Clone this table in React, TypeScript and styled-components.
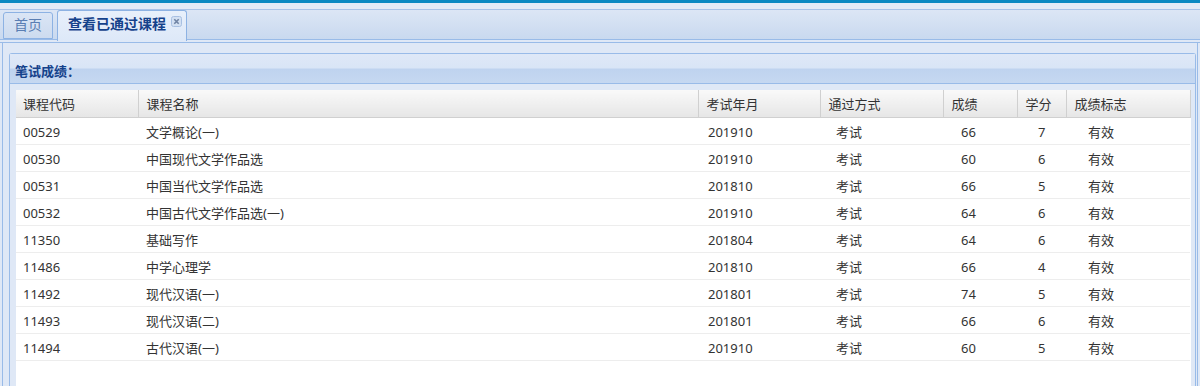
import styled, { createGlobalStyle } from "styled-components";

type TCourse = {
  code: string;
  name: string;
  month: string;
  method: string;
  score: number;
  credit: number;
  flag: string;
};

type TColumn = {
  title: string;
  width: number;
  indent: number; // data text offset
  key: keyof TCourse;
};

const columns: TColumn[] = [
  { title: "课程代码", width: 122, indent: 7, key: "code" },
  { title: "课程名称", width: 560, indent: 8, key: "name" },
  { title: "考试年月", width: 122, indent: 10, key: "month" },
  { title: "通过方式", width: 123, indent: 16, key: "method" },
  { title: "成绩", width: 74, indent: 18, key: "score" },
  { title: "学分", width: 49, indent: 21, key: "credit" },
  { title: "成绩标志", width: 124, indent: 22, key: "flag" },
];

const courses: TCourse[] = [
  { code: "00529", name: "文学概论(一)", month: "201910", method: "考试", score: 66, credit: 7, flag: "有效" },
  { code: "00530", name: "中国现代文学作品选", month: "201910", method: "考试", score: 60, credit: 6, flag: "有效" },
  { code: "00531", name: "中国当代文学作品选", month: "201810", method: "考试", score: 66, credit: 5, flag: "有效" },
  { code: "00532", name: "中国古代文学作品选(一)", month: "201910", method: "考试", score: 64, credit: 6, flag: "有效" },
  { code: "11350", name: "基础写作", month: "201804", method: "考试", score: 64, credit: 6, flag: "有效" },
  { code: "11486", name: "中学心理学", month: "201810", method: "考试", score: 66, credit: 4, flag: "有效" },
  { code: "11492", name: "现代汉语(一)", month: "201801", method: "考试", score: 74, credit: 5, flag: "有效" },
  { code: "11493", name: "现代汉语(二)", month: "201801", method: "考试", score: 66, credit: 6, flag: "有效" },
  { code: "11494", name: "古代汉语(一)", month: "201910", method: "考试", score: 60, credit: 5, flag: "有效" },
];

const GlobalStyle = createGlobalStyle`
  html, body, #root {
    margin: 0;
    height: 100%;
  }
  body {
    background: #dfe8f6;
    font-family: "Noto Sans", "Noto Sans CJK SC", sans-serif;
    font-size: 13px;
    color: #333;
    overflow: hidden;
  }
`;

const Page = styled.div`
  display: flex;
  flex-direction: column;
  height: 100%;
`;

const TopBar = styled.div`
  height: 3px;
  background: #0b89c2;
`;

const TabHeader = styled.div`
  padding-top: 6px;
  background: #e3ebf7;
`;

const TabStrip = styled.div`
  display: flex;
  align-items: flex-end;
  gap: 4px;
  height: 29px;
  padding-left: 3px;
  border-top: 1px solid #a9c3e8;
  border-bottom: 1px solid #99bbe8;
  background: linear-gradient(#dce6f5, #c9d9ef);
`;

const Tab = styled.div<{ $active?: boolean }>`
  display: flex;
  align-items: center;
  gap: 5px;
  box-sizing: border-box;
  height: ${(p) => (p.$active ? "31px" : "27px")};
  margin-bottom: ${(p) => (p.$active ? "-2px" : "0")};
  padding: ${(p) => (p.$active ? "0 4px 4px 10px" : "0 10px 2px 10px")};
  border: 1px solid #8db2e3;
  border-bottom: ${(p) => (p.$active ? "none" : "1px solid #8db2e3")};
  border-radius: 3px 3px 0 0;
  background: ${(p) =>
    p.$active
      ? "linear-gradient(#e8f0fb, #dde8f8)"
      : "linear-gradient(#dae5f5, #cddbef)"};
  color: ${(p) => (p.$active ? "#15428b" : "#5a7eb3")};
  font-size: 14px;
  font-weight: ${(p) => (p.$active ? "bold" : "normal")};
  line-height: 20px;
  white-space: nowrap;
`;

const CloseIcon = styled.svg`
  margin-top: -6px;
`;

const TabStripFooter = styled.div`
  height: 2px;
  background: #dfe8f6;
  border-bottom: 1px solid #99bbe8;
`;

const TabBody = styled.div`
  flex: 1;
  display: flex;
  flex-direction: column;
  margin: 0 2px;
  padding: 10px 1px 0 6px;
  border-left: 1px solid #99bbe8;
  border-right: 1px solid #99bbe8;
  min-height: 0;
`;

const Panel = styled.div`
  flex: 1;
  display: flex;
  flex-direction: column;
  border: 1px solid #99bbe8;
  border-bottom: none;
  border-radius: 3px 3px 0 0;
  min-height: 0;
`;

const PanelHeader = styled.div`
  height: 30px;
  box-sizing: border-box;
  padding: 9px 5px 0;
  border-bottom: 1px solid #99bbe8;
  background: linear-gradient(#dfe8f7 0%, #d9e5f6 48%, #bfd3ef 52%, #c6d8f1 100%);
  color: #15428b;
  font-weight: bold;
  font-size: 13px;
  line-height: 16px;
`;

const PanelBody = styled.div`
  flex: 1;
  display: flex;
  padding: 6px 5px 0 6px;
  background: #dfe8f6;
  min-height: 0;
`;

const GridWrap = styled.div`
  flex: 1;
  background: #fff;
`;

const Grid = styled.table`
  width: 1174px;
  table-layout: fixed;
  border-collapse: collapse;
`;

const HeadCell = styled.th`
  height: 27px;
  padding: 0 0 0 8px;
  text-align: left;
  font-weight: normal;
  color: #333;
  background: linear-gradient(#f9f9f9, #e6e6e6);
  border-bottom: 1px solid #d0d0d0;
  border-left: 1px solid #fff;
  border-right: 1px solid #d0d0d0;
  line-height: 18px;
  &:first-child {
    border-left: none;
    padding-left: 7px;
  }
`;

const Cell = styled.td<{ $indent: number }>`
  height: 27px;
  box-sizing: border-box;
  padding: 1px 0 0 ${(p) => p.$indent}px;
  border-bottom: 1px solid #ededed;
  color: #333;
  line-height: 18px;
  white-space: nowrap;
`;

function ScoreGrid() {
  return (
    <Grid>
      <colgroup>
        {columns.map((c) => (
          <col key={c.key} style={{ width: c.width }} />
        ))}
      </colgroup>
      <thead>
        <tr>
          {columns.map((c) => (
            <HeadCell key={c.key}>{c.title}</HeadCell>
          ))}
        </tr>
      </thead>
      <tbody>
        {courses.map((course) => (
          <tr key={course.code}>
            {columns.map((c) => (
              <Cell key={c.key} $indent={c.indent}>
                {course[c.key]}
              </Cell>
            ))}
          </tr>
        ))}
      </tbody>
    </Grid>
  );
}

export default function App() {
  return (
    <Page>
      <GlobalStyle />
      <TopBar />
      <TabHeader>
        <TabStrip>
          <Tab>首页</Tab>
          <Tab $active>
            查看已通过课程
            <CloseIcon width="11" height="11" viewBox="0 0 11 11">
              <rect x="0.5" y="0.5" width="10" height="10" rx="2" fill="#d3e0f2" stroke="#a8c0e2" />
              <path d="M3.3 3.3 L7.7 7.7 M7.7 3.3 L3.3 7.7" stroke="#6f83a3" strokeWidth="1.6" />
            </CloseIcon>
          </Tab>
        </TabStrip>
        <TabStripFooter />
      </TabHeader>
      <TabBody>
        <Panel>
          <PanelHeader>笔试成绩：</PanelHeader>
          <PanelBody>
            <GridWrap>
              <ScoreGrid />
            </GridWrap>
          </PanelBody>
        </Panel>
      </TabBody>
    </Page>
  );
}
